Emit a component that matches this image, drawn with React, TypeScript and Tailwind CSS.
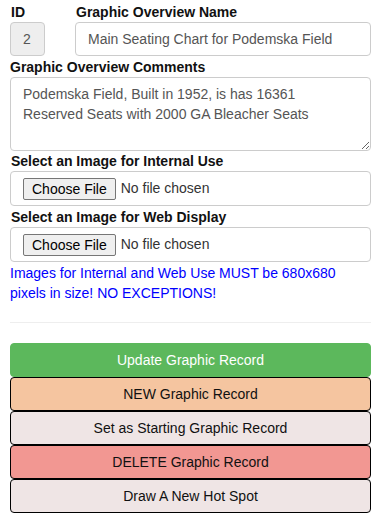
import React from "react";

const labelCls = "block h-[20px] leading-[20px] text-[14px] font-bold text-[#111]";
const boxCls = "border border-[#ccc] rounded-[4px] bg-white";

function FileRow() {
  return (
    <div className={`${boxCls} h-[35px] flex items-center pl-[12px]`}>
      <button
        type="button"
        className="h-[22px] px-[8px] border border-[#767676] rounded-[2px] bg-[#efefef] text-[14px] leading-[20px] text-black"
      >
        Choose File
      </button>
      <span className="ml-[5px] text-[14px] text-[#333]">No file chosen</span>
    </div>
  );
}

function Btn({ children, cls }: { children: React.ReactNode; cls: string }) {
  return (
    <button
      type="button"
      className={`w-full h-[34px] rounded-[4px] border text-[14px] leading-[20px] text-center ${cls}`}
    >
      {children}
    </button>
  );
}

export default function App() {
  return (
    <div
      className="w-[377px] h-[515px] bg-white pl-[10px] pr-[6px] pt-[2px] overflow-hidden"
      style={{ fontFamily: '"Liberation Sans", Arial, sans-serif' }}
    >
      <div className="flex">
        <div className="w-[35px]">
          <label className={`${labelCls} pl-[1px]`}>ID</label>
          <input
            readOnly
            value="2"
            className="w-[35px] h-[34px] border border-[#ccc] rounded-[4px] bg-[#eee] px-[12px] text-[14px] text-[#555] outline-none"
          />
        </div>
        <div className="ml-[30px] flex-1">
          <label className={`${labelCls} pl-[1px]`}>Graphic Overview Name</label>
          <input
            readOnly
            value="Main Seating Chart for Podemska Field"
            className={`${boxCls} w-full h-[34px] px-[12px] text-[14px] text-[#555] outline-none`}
          />
        </div>
      </div>
      <label className={`${labelCls} mt-[1px]`}>Graphic Overview Comments</label>
      <textarea
        readOnly
        defaultValue="Podemska Field, Built in 1952, is has 16361 Reserved Seats with 2000 GA Bleacher Seats"
        className={`${boxCls} block w-full h-[74px] px-[12px] py-[6px] text-[14px] leading-[20px] text-[#555] outline-none`}
      />
      <label className={`${labelCls} mt-[0px] pl-[1px]`}>Select an Image for Internal Use</label>
      <FileRow />
      <label className={`${labelCls} mt-[1px] pl-[1px]`}>Select an Image for Web Display</label>
      <FileRow />
      <p className="mt-[1px] text-[14px] leading-[20px] text-[#0000ff]">
        Images for Internal and Web Use MUST be 680x680
        <br />
        pixels in size! NO EXCEPTIONS!
      </p>
      <hr className="mt-[19px] border-0 border-t border-[#eee]" />
      <div className="mt-[20px] flex flex-col">
        <Btn cls="bg-[#5cb85c] border-[#5cb85c] text-white">Update Graphic Record</Btn>
        <Btn cls="bg-[#f5c5a0] border-black text-[#111]">NEW Graphic Record</Btn>
        <Btn cls="bg-[#efe5e5] border-black text-[#111]">Set as Starting Graphic Record</Btn>
        <Btn cls="bg-[#f29792] border-black text-[#111]">DELETE Graphic Record</Btn>
        <Btn cls="bg-[#efe5e5] border-black text-[#111]">Draw A New Hot Spot</Btn>
      </div>
    </div>
  );
}
